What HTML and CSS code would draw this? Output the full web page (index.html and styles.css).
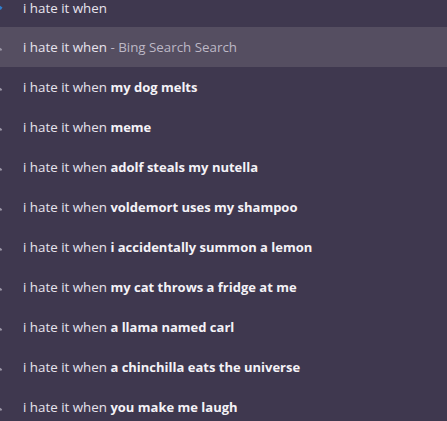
FILE: index.html
```html
<!DOCTYPE html>
<html>
<head>
<meta charset="utf-8">
<link rel="stylesheet" href="styles.css">
</head>
<body>
<ul class="list">
  <li class="row"><span class="ico blue"></span><span class="txt">i hate it when</span></li>
  <li class="row active"><span class="ico"></span><span class="txt">i hate it when <span class="sub">- Bing Search Search</span></span></li>
  <li class="row"><span class="ico"></span><span class="txt">i hate it when <b>my dog melts</b></span></li>
  <li class="row"><span class="ico"></span><span class="txt">i hate it when <b>meme</b></span></li>
  <li class="row"><span class="ico"></span><span class="txt">i hate it when <b>adolf steals my nutella</b></span></li>
  <li class="row"><span class="ico"></span><span class="txt">i hate it when <b>voldemort uses my shampoo</b></span></li>
  <li class="row"><span class="ico"></span><span class="txt">i hate it when <b>i accidentally summon a lemon</b></span></li>
  <li class="row"><span class="ico"></span><span class="txt">i hate it when <b>my cat throws a fridge at me</b></span></li>
  <li class="row"><span class="ico"></span><span class="txt">i hate it when <b>a llama named carl</b></span></li>
  <li class="row"><span class="ico"></span><span class="txt">i hate it when <b>a chinchilla eats the universe</b></span></li>
  <li class="row"><span class="ico"></span><span class="txt">i hate it when <b>you make me laugh</b></span></li>
</ul>
</body>
</html>
```
FILE: styles.css
```css
html, body {
  margin: 0;
  padding: 0;
  background: #3f384f;
  overflow: hidden;
}
.list {
  list-style: none;
  margin: -12px 0 0 0;
  padding: 0;
  font-family: "Open Sans", "Noto Sans", sans-serif;
  font-size: 13.35px;
  color: #e8e4ee;
}
.row {
  height: 40px;
  display: flex;
  align-items: center;
  padding-left: 23px;
  position: relative;
}
.row:first-child {
  height: 39px;
}
.row.active {
  background: #554e61;
}
.ico {
  position: absolute;
  left: -2px;
  top: 21px;
  width: 4px;
  height: 2px;
  background: #9a95a5;
  transform: rotate(35deg);
}
.ico.blue {
  background: #2f7fd0;
  top: 18px;
  height: 3px;
}
.txt {
  white-space: nowrap;
}
.txt b {
  font-weight: 700;
  font-size: 13px;
  color: #f4f2f7;
}
.sub {
  color: #bdb8c6;
}
```
